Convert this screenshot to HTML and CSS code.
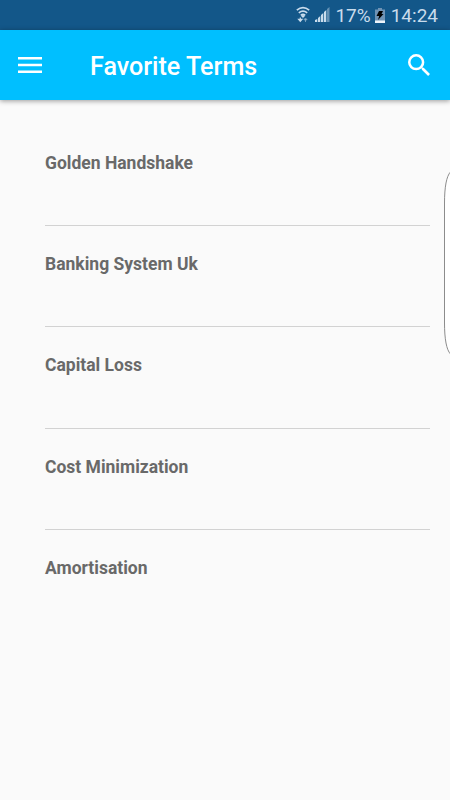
FILE: index.html
```html
<!DOCTYPE html>
<html lang="en">
<head>
    <meta charset="UTF-8">
    <meta name="viewport" content="width=device-width, initial-scale=1.0">
    <title>Favorite Terms</title>
    <link rel="stylesheet" href="styles.css">
</head>
<body>
    <div class="status-bar">
        <svg class="wifi" width="14" height="18" viewBox="0 0 14 18" fill="none" stroke="currentColor" stroke-width="1.7">
            <path d="M.8 4.200Q7-.8 13.200 4.200M2.800 6.900Q7 3.500 11.200 6.900M4.800 9.300Q7 7.600 9.200 9.300"/>
            <path d="M7 8.800l2 1.300-2 1.800-2-1.800z" fill="currentColor" stroke="none"/>
            <path d="M4.300 11.500v3M2.600 13.400h3.400L4.300 15.400z" stroke-width="1.200"/>
            <path d="M9.500 16v-3M7.900 13.800h3.200L9.500 12z" stroke-width="1" opacity=".5"/>
        </svg>
        <svg class="signal" width="15" height="16" viewBox="0 0 15 16" fill="currentColor">
            <path d="M0 15v-2l2.300-1v3zM3 15v-4l2.300-2v6zM6 15V8l2.300-2v9zM9 15V5l2.300-2v12z"/>
            <path d="M12 15V2l2.500-2v15z" opacity=".45"/>
        </svg>
        <span class="percent">17%</span>
        <svg class="battery" width="10" height="15" viewBox="0 0 10 15">
            <path d="M3 0h4v1.500h3V15H0V1.500h3z" fill="#6f93b5"/>
            <path d="M0 12.500h10V15H0z" fill="#eef4fa"/>
            <path d="M4 3h4L6.500 6H8.500L3 12l1.200-4H1.500z" fill="#000"/>
        </svg>
        <span class="clock">14:24</span>
    </div>

    <header class="toolbar">
        <svg class="menu" width="24" height="16" viewBox="0 0 24 16" fill="#fff">
            <path d="M0 0h24v2.500H0zM0 6.800h24v2.500H0zM0 13.500h24V16H0z"/>
        </svg>
        <h1>Favorite Terms</h1>
        <svg class="search" width="22" height="22" viewBox="3 3 17.5 17.5" fill="#fff">
            <path d="M15.500 14h-.79l-.28-.27A6.470 6.470 0 0 0 16 9.500 6.500 6.500 0 1 0 9.500 16c1.610 0 3.090-.59 4.230-1.570l.27.28v.79l5 4.990L20.490 19l-4.990-5zm-6 0a4.500 4.500 0 1 1 0-9 4.500 4.500 0 0 1 0 9z"/>
        </svg>
    </header>

    <ul class="terms">
        <li>Golden Handshake</li>
        <li>Banking System Uk</li>
        <li>Capital Loss</li>
        <li>Cost Minimization</li>
        <li>Amortisation</li>
    </ul>

    <!-- edge panel handle, sits over the list -->
    <svg class="edge-handle" width="8" height="184" viewBox="0 0 8 184">
        <path d="M8.500 1C4.500 5 2.500 16 2.500 32v120c0 16 2 27 6 31" fill="#fff" stroke="#8c8c8c"/>
    </svg>
</body>
</html>
```

FILE: styles.css
```css
:root {
    --status-color: #135789;
    --primary-color: #00bfff;
    --bg-color: #fafafa;
    --text-color: #696969;
    --divider-color: #d2d2d2;
}

* {
    box-sizing: border-box;
}

body {
    margin: 0;
    min-height: 100vh;
    position: relative;
    overflow: hidden;
    background-color: var(--bg-color);
    color: var(--text-color);
    font-family: Roboto, sans-serif;
}

.status-bar {
    height: 30px;
    padding-right: 12px;
    display: flex;
    justify-content: flex-end;
    align-items: center;
    background-color: var(--status-color);
    color: #c9dcec;
    font-size: 19px;
    line-height: 30px;
}

.status-bar span {
    padding-top: 2px;
}

.wifi {
    margin-right: 5px;
}

.signal {
    margin-right: 5px;
}

.battery {
    margin: 0 6px 0 4px;
}

.toolbar {
    height: 70px;
    padding: 0 20px 0 18px;
    display: flex;
    align-items: center;
    background-color: var(--primary-color);
    box-shadow: 0 1px 5px rgba(0, 0, 0, 0.4);
}

.toolbar h1 {
    flex: 1;
    margin: 2px 0 0 48px;
    color: #fff;
    font-size: 25.1px;
    font-weight: 500;
}

.terms {
    margin: 25px 20px 0 45px;
    padding: 0;
    list-style: none;
}

.terms li {
    height: 101.2px;
    padding-top: 28px;
    border-bottom: 1px solid var(--divider-color);
    font-size: 17.5px;
    font-weight: bold;
    line-height: 21px;
}

.terms li:last-child {
    border-bottom: none;
}

.edge-handle {
    position: absolute;
    top: 171px;
    right: 0;
}
```
